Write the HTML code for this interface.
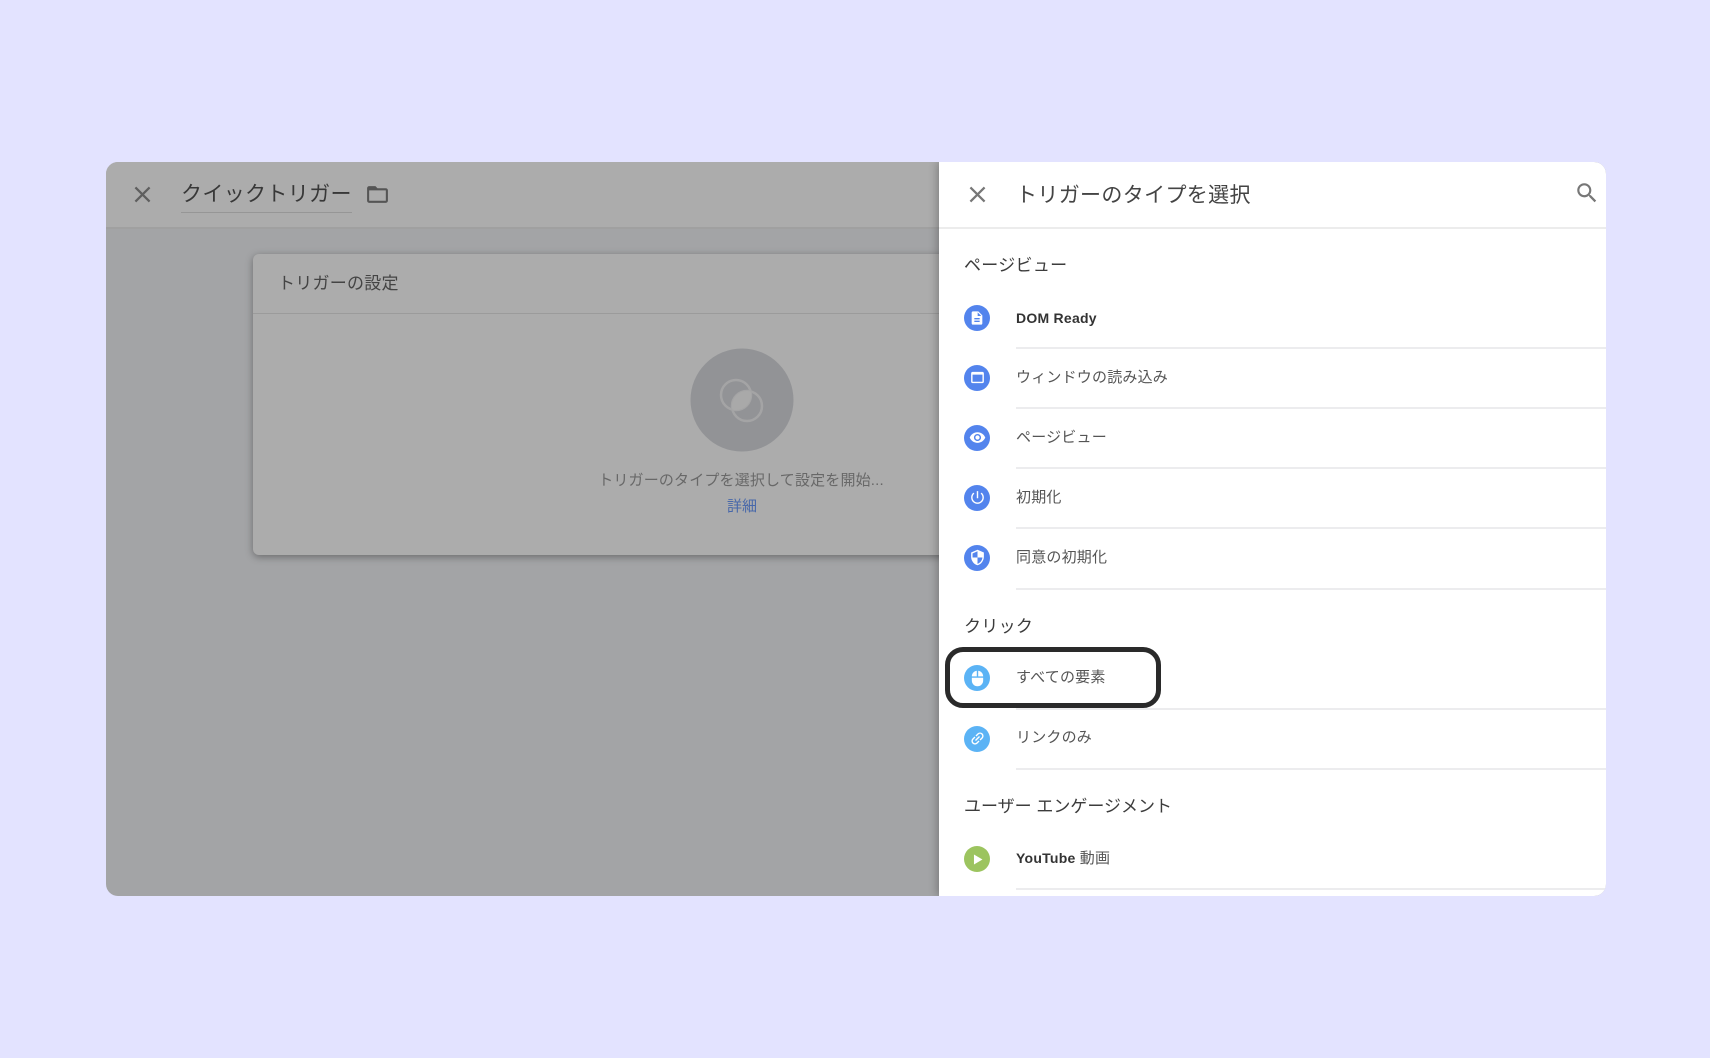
<!DOCTYPE html>
<html lang="ja"><head><meta charset="utf-8"><title>トリガーのタイプを選択</title>
<style>
html,body{margin:0;padding:0;width:1710px;height:1058px;overflow:hidden;background:#e3e3ff;font-family:"Liberation Sans","Noto Sans CJK JP",sans-serif}
*{box-sizing:border-box}
#card{position:absolute;left:106px;top:162px;width:1500px;height:734px;border-radius:12px;overflow:hidden;background:#a3a4a6}
#card .a{position:absolute}
.t{position:absolute;white-space:nowrap;line-height:30px;height:30px;font-weight:400}
.l{position:absolute;height:2px;background:#ececee}
.ic{position:absolute;width:26px;height:26px;border-radius:50%}
.ic svg{position:absolute;left:4.5px;top:4.5px;width:17px;height:17px;fill:#fff}
.b{background:#5384ed}.c{background:#5bb3f5}.g{background:#9cc45f}
.item{font-size:15px;letter-spacing:.2px;color:#555}
.sec{font-size:17px;color:#3c3c3c;letter-spacing:.3px}
.bd{font-family:"Liberation Sans",sans-serif;font-size:14px;font-weight:700;color:#333;letter-spacing:.25px}
</style></head><body>
<div id="card">
<!-- left header -->
<div class="a" style="left:0;top:0;width:833px;height:67px;background:#acacac;border-bottom:2px solid #a0a0a0"></div>
<svg class="a" style="left:23px;top:18.5px" width="27" height="27" viewBox="0 0 24 24" fill="#5f5f5f"><path d="M19 6.41L17.59 5 12 10.59 6.41 5 5 6.41 10.59 12 5 17.59 6.41 19 12 13.41 17.59 19 19 17.59 13.41 12z"/></svg>
<div class="t" style="left:75px;top:18px;font-size:21px;color:#383838;letter-spacing:.35px">クイックトリガー</div>
<div class="a" style="left:75px;top:50px;width:171px;height:1px;background:#969696"></div>
<svg class="a" style="left:259px;top:20px" width="25" height="25" viewBox="0 0 24 24" fill="#555"><path d="M20 6h-8l-2-2H4c-1.1 0-1.99.9-1.99 2L2 18c0 1.1.9 2 2 2h16c1.1 0 2-.9 2-2V8c0-1.1-.9-2-2-2zm0 12H4V8h16v10z"/></svg>
<!-- inner card -->
<div class="a" style="left:147px;top:92px;width:800px;height:301px;background:#acacac;border-radius:6px;box-shadow:0 2px 8px rgba(0,0,0,.35)"></div>
<div class="a" style="left:147px;top:151px;width:800px;height:1px;background:#9b9b9b"></div>
<div class="t" style="left:172px;top:107px;font-size:17px;color:#444;letter-spacing:.25px">トリガーの設定</div>
<svg class="a" style="left:584px;top:186px" width="104" height="104" viewBox="0 0 104 104">
<circle cx="52" cy="52" r="51.5" fill="#929396"/>
<circle cx="46" cy="47" r="15" fill="none" stroke="#a4a4a5" stroke-width="2.5"/>
<circle cx="57" cy="58" r="15" fill="none" stroke="#a4a4a5" stroke-width="2.5"/>
<path d="M60.6 43.4A15 15 0 0 1 42.4 61.6A15 15 0 0 1 60.6 43.4Z" fill="#a9a9a9"/>
</svg>
<div class="t" style="left:490px;width:290px;text-align:center;top:304px;font-size:15px;color:#686868;letter-spacing:.17px">トリガーのタイプを選択して設定を開始...</div>
<div class="t" style="left:586px;width:100px;text-align:center;top:330px;font-size:15px;color:#4868aa">詳細</div>
<!-- right panel -->
<div class="a" style="left:833px;top:0;width:667px;height:734px;background:#fff;box-shadow:-2px 0 8px rgba(0,0,0,.25)"></div>
<div class="a" style="left:833px;top:65px;width:667px;height:2px;background:#ececec"></div>
<svg class="a" style="left:858px;top:18.5px" width="27" height="27" viewBox="0 0 24 24" fill="#777"><path d="M19 6.41L17.59 5 12 10.59 6.41 5 5 6.41 10.59 12 5 17.59 6.41 19 12 13.41 17.59 19 19 17.59 13.41 12z"/></svg>
<div class="t" style="left:910px;top:19px;font-size:21px;color:#444;letter-spacing:.35px">トリガーのタイプを選択</div>
<svg class="a" style="left:1468px;top:18px" width="26" height="26" viewBox="0 0 24 24" fill="#777"><path d="M15.5 14h-.79l-.28-.27C15.41 12.59 16 11.11 16 9.5 16 5.91 13.09 3 9.5 3S3 5.91 3 9.5 5.91 16 9.5 16c1.61 0 3.09-.59 4.23-1.57l.27.28v.79l5 4.99L20.49 19l-4.99-5zm-6 0C7.01 14 5 11.99 5 9.5S7.01 5 9.5 5 14 7.01 14 9.5 11.99 14 9.5 14z"/></svg>

<div class="t sec" style="left:858px;top:89px">ページビュー</div>
<div class="ic b" style="left:858px;top:143px"><svg viewBox="0 0 24 24" style="left:5px;top:5px;width:16px;height:16px"><path d="M14 2H6c-1.1 0-1.99.9-1.99 2L4 20c0 1.1.89 2 1.99 2H18c1.1 0 2-.9 2-2V8l-6-6zm2 16H8v-2h8v2zm0-4H8v-2h8v2zm-3-5V3.5L18.5 9H13z"/></svg></div>
<div class="t bd" style="left:910px;top:141px">DOM Ready</div>
<div class="l" style="left:910px;top:185px;width:590px"></div>

<div class="ic b" style="left:858px;top:203px"><svg viewBox="0 0 24 24" style="top:4px"><path d="M19 4H5c-1.11 0-2 .9-2 2v12c0 1.1.89 2 2 2h14c1.1 0 2-.9 2-2V6c0-1.1-.89-2-2-2zm0 14H5V8h14v10z"/></svg></div>
<div class="t item" style="left:910px;top:201px">ウィンドウの読み込み</div>
<div class="l" style="left:910px;top:245px;width:590px"></div>

<div class="ic b" style="left:858px;top:263px"><svg viewBox="0 0 24 24" style="top:4px;left:4.5px"><path d="M12 4.5C7 4.5 2.73 7.61 1 12c1.73 4.39 6 7.5 11 7.5s9.27-3.11 11-7.5c-1.73-4.39-6-7.5-11-7.5zM12 17c-2.76 0-5-2.24-5-5s2.24-5 5-5 5 2.24 5 5-2.24 5-5 5zm0-8c-1.66 0-3 1.34-3 3s1.34 3 3 3 3-1.34 3-3-1.34-3-3-3z"/></svg></div>
<div class="t item" style="left:910px;top:261px">ページビュー</div>
<div class="l" style="left:910px;top:305px;width:590px"></div>

<div class="ic b" style="left:858px;top:323px"><svg viewBox="0 0 24 24" style="top:4px;left:4.5px"><path d="M13 3h-2v10h2V3zm4.83 2.17l-1.42 1.42C17.99 7.86 19 9.81 19 12c0 3.87-3.13 7-7 7s-7-3.13-7-7c0-2.19 1.01-4.14 2.58-5.42L6.17 5.17C4.23 6.82 3 9.26 3 12c0 4.97 4.03 9 9 9s9-4.03 9-9c0-2.74-1.23-5.18-3.17-6.83z"/></svg></div>
<div class="t item" style="left:910px;top:321px">初期化</div>
<div class="l" style="left:910px;top:365px;width:590px"></div>

<div class="ic b" style="left:858px;top:383px"><svg viewBox="0 0 24 24" style="top:4px;left:4.5px"><path d="M12 1L3 5v6c0 5.55 3.84 10.74 9 12 5.16-1.26 9-6.45 9-12V5l-9-4zm0 10.99h7c-.53 4.12-3.28 7.79-7 8.94V12H5V6.3l7-3.11v8.8z"/></svg></div>
<div class="t item" style="left:910px;top:381px">同意の初期化</div>
<div class="l" style="left:910px;top:426px;width:590px"></div>

<div class="t sec" style="left:858px;top:450px">クリック</div>
<div class="ic c" style="left:858px;top:503px"><svg viewBox="0 0 24 24" style="left:4.5px"><path d="M13 1.07V9h7c0-4.08-3.05-7.44-7-7.93zM4 15c0 4.42 3.58 8 8 8s8-3.58 8-8v-4H4v4zm7-13.93C7.05 1.56 4 4.92 4 9h7V1.07z"/></svg></div>
<div class="t item" style="left:910px;top:501px">すべての要素</div>
<div class="l" style="left:910px;top:546px;width:590px"></div>
<div class="a" style="left:839px;top:485px;width:216px;height:61px;border:5.5px solid #2a2a2a;border-radius:18px"></div>

<div class="ic c" style="left:858px;top:564px"><svg viewBox="0 0 24 24" style="transform:rotate(-45deg);top:4px;left:4.5px"><path d="M3.9 12c0-1.71 1.39-3.1 3.1-3.1h4V7H7c-2.76 0-5 2.24-5 5s2.24 5 5 5h4v-1.9H7c-1.71 0-3.1-1.39-3.1-3.1zM8 13h8v-2H8v2zm9-6h-4v1.9h4c1.71 0 3.1 1.39 3.1 3.1s-1.39 3.1-3.1 3.1h-4V17h4c2.76 0 5-2.24 5-5s-2.24-5-5-5z"/></svg></div>
<div class="t item" style="left:910px;top:561px">リンクのみ</div>
<div class="l" style="left:910px;top:606px;width:590px"></div>

<div class="t sec" style="left:858px;top:630px;letter-spacing:0;font-size:17px">ユーザー エンゲージメント</div>
<div class="ic g" style="left:858px;top:684px"><svg viewBox="0 0 24 24"><path d="M7 5v14l12-7z"/></svg></div>
<div class="t" style="left:910px;top:681px;font-size:14px;color:#333;letter-spacing:.25px"><b>YouTube</b> <span style="color:#555;font-size:15px">動画</span></div>
<div class="l" style="left:910px;top:726px;width:590px"></div>
</div>
</body></html>
